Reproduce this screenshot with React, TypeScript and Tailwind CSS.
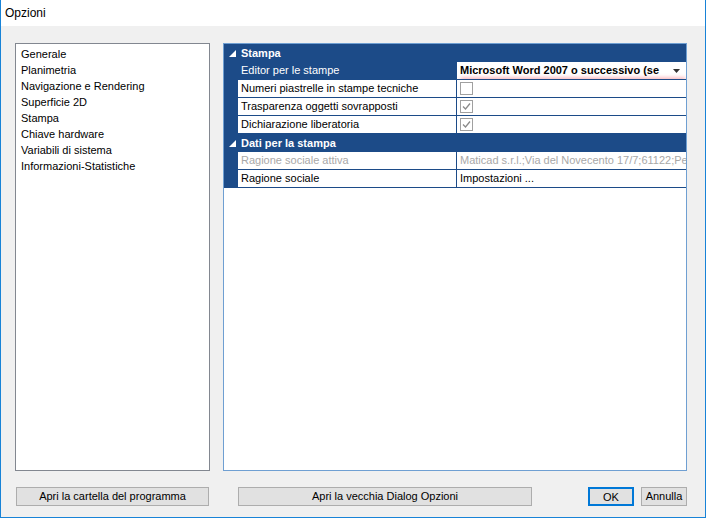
const categories = [
  "Generale",
  "Planimetria",
  "Navigazione e Rendering",
  "Superficie 2D",
  "Stampa",
  "Chiave hardware",
  "Variabili di sistema",
  "Informazioni-Statistiche",
];

function Check({ checked }: { checked: boolean }) {
  return (
    <span className="flex h-[13px] w-[13px] items-center justify-center border border-[#a0a0a0] bg-white">
      {checked && (
        <svg width="9" height="9" viewBox="0 0 9 9">
          <path d="M1 4.5 L3.5 7 L8 1.5" fill="none" stroke="#8a8a8a" strokeWidth="1.3" />
        </svg>
      )}
    </span>
  );
}

function Header({ title }: { title: string }) {
  return (
    <div className="flex h-[18px] items-center bg-[#1c4b88] text-white font-bold">
      <span className="flex w-[17px] justify-center">
        <svg width="7" height="7" viewBox="0 0 7 7">
          <path d="M7 0 L7 7 L0 7 Z" fill="white" />
        </svg>
      </span>
      <span>{title}</span>
    </div>
  );
}

function Row({
  label,
  children,
  selected,
  disabled,
}: {
  label: string;
  children: React.ReactNode;
  selected?: boolean;
  disabled?: boolean;
}) {
  return (
    <div className="flex h-[18px] bg-[#1c4b88]">
      <div className="w-[14px] shrink-0" />
      <div
        className={
          "flex w-[218px] shrink-0 items-center pl-[3px] mb-px " +
          (selected ? "bg-[#1c4b88] text-white" : "bg-white") +
          (disabled ? " text-[#a8a8a8]" : "")
        }
      >
        {label}
      </div>
      <div
        className={
          "ml-px flex flex-1 items-center overflow-hidden whitespace-nowrap bg-white pl-[3px] mb-px " +
          (disabled ? "text-[#a8a8a8]" : "")
        }
      >
        {children}
      </div>
    </div>
  );
}

export default function App() {
  return (
    <div
      className="flex h-[518px] w-[706px] flex-col border border-t-0 border-[#1883d7] bg-[#f0f0f0] text-[11px] text-black"
      style={{ fontFamily: '"Liberation Sans", Arial, sans-serif' }}
    >
      <div className="flex h-[26px] items-center bg-white pl-[4px] text-[12px]">Opzioni</div>

      <div className="flex gap-[13px] pl-[14px] pt-[17px]">
        {/* category list */}
        <div className="h-[428px] w-[195px] border border-[#828790] bg-white px-[5px] pt-[2px]">
          {categories.map((c) => (
            <div key={c} className="h-[16px] leading-[16px]">
              {c}
            </div>
          ))}
        </div>

        {/* property grid */}
        <div className="h-[428px] w-[464px] border border-[#6f9fd2] bg-white">
          <Header title="Stampa" />
          <Row label="Editor per le stampe" selected>
            <div className="relative flex w-full items-center pr-[6px] font-bold">
              <span className="flex-1 overflow-hidden">Microsoft Word 2007 o successivo (se</span>
              <svg width="7" height="4" viewBox="0 0 7 4">
                <path d="M0 0 L7 0 L3.5 4 Z" fill="#333" />
              </svg>
              <div className="absolute -bottom-[3px] left-0 right-0 h-[4px] rounded-full bg-[#f04050]/50 blur-[2px]" />
            </div>
          </Row>
          <Row label="Numeri piastrelle in stampe tecniche">
            <Check checked={false} />
          </Row>
          <Row label="Trasparenza oggetti sovrapposti">
            <Check checked />
          </Row>
          <Row label="Dichiarazione liberatoria">
            <Check checked />
          </Row>
          <Header title="Dati per la stampa" />
          <Row label="Ragione sociale attiva" disabled>
            Maticad s.r.l.;Via del Novecento 17/7;61122;Pesaro
          </Row>
          <Row label="Ragione sociale">Impostazioni ...</Row>
        </div>
      </div>

      <div className="mt-[16px] flex h-[19px] pl-[15px]">
        <button className="w-[193px] border border-[#adadad] bg-[#e1e1e1]">
          Apri la cartella del programma
        </button>
        <button className="ml-[29px] w-[294px] border border-[#adadad] bg-[#e1e1e1]">
          Apri la vecchia Dialog Opzioni
        </button>
        <button className="ml-[56px] w-[46px] border-2 border-[#0078d7] bg-[#e1e1e1]">OK</button>
        <button className="ml-[7px] w-[46px] border border-[#adadad] bg-[#e1e1e1]">Annulla</button>
      </div>
    </div>
  );
}
